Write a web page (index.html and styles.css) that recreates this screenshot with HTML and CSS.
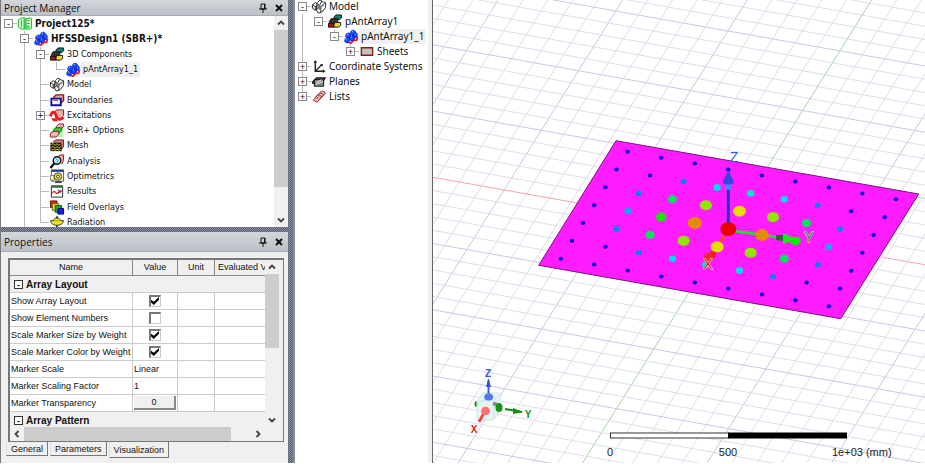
FILE: index.html
```html
<!DOCTYPE html>
<html lang="en">
<head>
  <meta charset="UTF-8">
  <meta name="viewport" content="width=device-width, initial-scale=1.0">
  <title>Project125 - HFSSDesign1</title>
  <link rel="stylesheet" href="styles.css">
</head>
<body>
  <svg class="defs" aria-hidden="true">
    <symbol id="i-project" viewBox="0 0 16 16"><path d="M1 4l3-2h4v12H4l-3-2zM9 3l5-1 1 1v10l-2 1H9z" fill="#d8ffd8" stroke="#10b020"/><path d="M4 4v8M10 5h3M10 8h3M7 3v10" stroke="#10b020"/><path d="M9 10h4v3H9z" fill="#40e040"/></symbol>
    <symbol id="i-array" viewBox="0 0 16 16"><path d="M4 14l4 1 3-3 3 0 1-4" fill="none" stroke="#f02020" stroke-width="2"/><g fill="#1848ff" stroke="#0018c0" stroke-width=".6"><path d="M8 2l3-1 2 2-1 3-3 1-2-2zM11 5l3-1 1 2-1 3-3 1-2-2zM3 5l3-1 2 2-1 3-3 1-2-2zM7 8l3-1 2 2-1 3-3 1-2-2zM2 10l3-1 2 2-1 3-3 1-2-2z"/></g><path d="M9 3l1-.5M12 6l1-.5M4 6l1-.5M8 9l1-.5M3 11l1-.5" stroke="#70c0ff" stroke-width="1.500"/></symbol>
    <symbol id="i-comp" viewBox="0 0 16 16"><path d="M7 3l2-2h6v3l-2 2H7z" fill="#108070" stroke="#111"/><path d="M2 8l2-3h7v3l-2 2H2z" fill="#333" stroke="#111"/><path d="M1 10h6v4H1z" fill="#a01818" stroke="#111"/><path d="M7 10l2-1h5v3l-2 2H7z" fill="#e8d840" stroke="#111"/></symbol>
    <symbol id="i-model" viewBox="0 0 16 16"><g fill="#fff" stroke="#222"><path d="M1 6l3-2 3 2v4l-3 2-3-2zM6 4l3-3 3 2 3 1v5l-4 5-4 1-2-4z"/><path d="M1 6l3 2 3-2M4 8v4M7 5l3 3 4-3M10 8v6M7 9l3 2M11 2l-2 4"/></g><path d="M8 6l2 2v5l-3-3zM12 5l2 0-2 4z" fill="#777"/></symbol>
    <symbol id="i-bound" viewBox="0 0 16 16"><path d="M4 5l3-3h8v6l-3 3" fill="#e8a0a0" stroke="#801818" stroke-width="1.500"/><path d="M2 6h10v7H2z" fill="#fff" stroke="#1010a0" stroke-width="2"/><path d="M4 8h5" stroke="#e03030"/></symbol>
    <symbol id="i-exc" viewBox="0 0 16 16"><path d="M5 4l3-2h7v6l-3 3H7z" fill="#f0b0b0" stroke="#801818"/><path d="M1 9c2-7 5-5 6-1s4 6 8 2" fill="none" stroke="#f01818" stroke-width="3"/><path d="M2 11h5l2 3H4z" fill="#f01818"/></symbol>
    <symbol id="i-sbr" viewBox="0 0 16 16"><path d="M3 5h11v10H3z" fill="#a0ffa0"/><path d="M7 4l3-3h5v3l-3 3H7z" fill="#f0b8b8" stroke="#802020"/><path d="M4 8l3-3h6v3l-3 3H4z" fill="#40c040" stroke="#106010"/><path d="M1 11l3-2h6v3l-3 3H1z" fill="#f0b8b8" stroke="#802020"/></symbol>
    <symbol id="i-mesh" viewBox="0 0 16 16"><path d="M4 4l3-2h8v7l-2 3" fill="#d08080" stroke="#701010"/><path d="M1 5h12v9H1z" fill="#111"/><path d="M2 7l2-1 2 2 2-2 2 2 2-2M2 10l2-1 2 2 2-2 2 2 2-2M2 13l2-1 2 1 2-1 2 1 2-1" fill="none" stroke="#f0e030"/></symbol>
    <symbol id="i-analysis" viewBox="0 0 16 16"><path d="M8 4l3-3h4v6l-2 4" fill="#f0a8a8" stroke="#801818"/><circle cx="8" cy="7" r="4" fill="#b8f0f8" stroke="#111" stroke-width="1.500"/><path d="M5 10l-4 5" stroke="#111" stroke-width="2.500"/><path d="M7 5l2 2-1 2" fill="none" stroke="#2070c0"/></symbol>
    <symbol id="i-opti" viewBox="0 0 16 16"><path d="M2 1h13v12H2z" fill="#fff" stroke="#555"/><path d="M2 1h13v2H2z" fill="#2030a0"/><path d="M1 7h4v5H1z" fill="#f8f8a0" stroke="#777"/><circle cx="9" cy="8" r="4" fill="#f0e020" stroke="#444"/><circle cx="9" cy="8" r="1.500" fill="#fff" stroke="#333"/><path d="M6 14h7" stroke="#444" stroke-width="2"/></symbol>
    <symbol id="i-results" viewBox="0 0 16 16"><path d="M2 2h12v12H2z" fill="#fff" stroke="#222"/><path d="M2 2h12v2H2z" fill="#207040"/><path d="M3 10c2-5 3 0 5 0s3-4 6-2" fill="none" stroke="#e02020" stroke-width="1.300"/><path d="M9 6l3 4M12 6l-3 4" stroke="#333"/></symbol>
    <symbol id="i-field" viewBox="0 0 16 16"><path d="M1 1h7v7H1z" fill="#e81818" stroke="#701010"/><path d="M3 4h7v7H3z" fill="#f0e020" stroke="#706010"/><path d="M6 6h7v7H6z" fill="#20b030" stroke="#105010"/><path d="M9 9h6v6H9z" fill="#1020f0" stroke="#000060"/></symbol>
    <symbol id="i-rad" viewBox="0 0 16 16"><path d="M1 6h14c-1 4-4 5-7 5S2 10 1 6z" fill="#f0e020" stroke="#333"/><path d="M4 6c1-2 2-3 4-3s3 1 4 3" fill="#f0e020" stroke="#333"/><path d="M8 1v3M8 11v2" stroke="#333" stroke-width="1.500"/><path d="M4 15l4-3 4 3z" fill="#111"/></symbol>
    <symbol id="i-sheet" viewBox="0 0 16 16"><path d="M2 4h12v8H2z" fill="#c8c0c0" stroke="#802020" stroke-width="1.500"/></symbol>
    <symbol id="i-cs" viewBox="0 0 16 16"><path d="M4 3v10h9M4 13l7-7" fill="none" stroke="#222" stroke-width="1.500"/><path d="M4 1l2 3H2zM15 13l-3 2v-4zM12 5v3l-3-2z" fill="#222"/></symbol>
    <symbol id="i-planes" viewBox="0 0 16 16"><path d="M1 8l4-4h10l-4 6H1z" fill="#444" stroke="#111"/><path d="M3 6h10v7H3z" fill="#888" stroke="#111"/><path d="M5 9l6-3M5 11l7-3" stroke="#eee"/></symbol>
    <symbol id="i-lists" viewBox="0 0 16 16"><g fill="#f4c8c8" stroke="#902020"><path d="M6 7l5-5 4 2-5 6z"/><path d="M4 9l5-5 4 2-5 6z"/><path d="M2 12l5-6 4 2-5 6z"/></g><path d="M5 11l3-3" stroke="#902020"/></symbol>
    <symbol id="i-pin" viewBox="0 0 10 10"><path d="M3 1h4v5H3zM1 6h8M5 6v4" fill="none" stroke="#111"/><path d="M6 1h1v5H6z" fill="#111"/></symbol>
    <symbol id="i-close" viewBox="0 0 10 10"><path d="M2 2l6 6M8 2L2 8" stroke="#111" stroke-width="2"/></symbol>
    <symbol id="i-arrow" viewBox="0 0 10 10"><path d="M2 6.500l3-3 3 3" fill="none" stroke="#444" stroke-width="1.800"/></symbol>
  </svg>

  <main class="app">
    <div class="dock">
      <section class="panel">
        <header class="title">
          <h2>Project Manager</h2>
          <button aria-label="Pin"><svg><use href="#i-pin"/></svg></button>
          <button aria-label="Close"><svg><use href="#i-close"/></svg></button>
        </header>
        <div class="tree-box">
          <ul class="tree tree-project">
            <li><i class="h"><button class="exp">-</button></i><svg><use href="#i-project"/></svg><b>Project125*</b></li>
            <li><i></i><i class="t"><button class="exp">-</button></i><svg><use href="#i-array"/></svg><b>HFSSDesign1 (SBR+)*</b></li>
            <li><i></i><i class="v"></i><i class="t"><button class="exp">-</button></i><svg><use href="#i-comp"/></svg><span>3D Components</span></li>
            <li><i></i><i class="v"></i><i class="v"></i><i class="l"></i><svg><use href="#i-array"/></svg><span class="sel">pAntArray1_1</span></li>
            <li><i></i><i class="v"></i><i class="t"></i><svg><use href="#i-model"/></svg><span>Model</span></li>
            <li><i></i><i class="v"></i><i class="t"></i><svg><use href="#i-bound"/></svg><span>Boundaries</span></li>
            <li><i></i><i class="v"></i><i class="t"><button class="exp">+</button></i><svg><use href="#i-exc"/></svg><span>Excitations</span></li>
            <li><i></i><i class="v"></i><i class="t"></i><svg><use href="#i-sbr"/></svg><span>SBR+ Options</span></li>
            <li><i></i><i class="v"></i><i class="t"></i><svg><use href="#i-mesh"/></svg><span>Mesh</span></li>
            <li><i></i><i class="v"></i><i class="t"></i><svg><use href="#i-analysis"/></svg><span>Analysis</span></li>
            <li><i></i><i class="v"></i><i class="t"></i><svg><use href="#i-opti"/></svg><span>Optimetrics</span></li>
            <li><i></i><i class="v"></i><i class="t"></i><svg><use href="#i-results"/></svg><span>Results</span></li>
            <li><i></i><i class="v"></i><i class="t"></i><svg><use href="#i-field"/></svg><span>Field Overlays</span></li>
            <li><i></i><i class="v"></i><i class="l"></i><svg><use href="#i-rad"/></svg><span>Radiation</span></li>
          </ul>
          <div class="vscroll">
            <button aria-label="Scroll up"><svg><use href="#i-arrow"/></svg></button>
            <div class="track"><div class="thumb thumb-tree"></div></div>
            <button aria-label="Scroll down"><svg class="down"><use href="#i-arrow"/></svg></button>
          </div>
        </div>
      </section>

      <div class="splitter"></div>

      <section class="panel props">
        <header class="title title-props">
          <h2>Properties</h2>
          <button aria-label="Pin"><svg><use href="#i-pin"/></svg></button>
          <button aria-label="Close"><svg><use href="#i-close"/></svg></button>
        </header>
        <div class="frame">
          <div class="frame-top">
            <div class="table-clip">
              <table>
                <colgroup><col class="c-name"><col class="c-value"><col class="c-unit"><col class="c-eval"></colgroup>
                <thead><tr><th>Name</th><th>Value</th><th>Unit</th><th class="last">Evaluated V</th></tr></thead>
                <tbody>
                  <tr class="group"><td colspan="4"><button class="exp">-</button>Array Layout</td></tr>
                  <tr><td><label for="layout">Show Array Layout</label></td><td class="mid"><input type="checkbox" id="layout" checked></td><td></td><td></td></tr>
                  <tr><td><label for="numbers">Show Element Numbers</label></td><td class="mid"><input type="checkbox" id="numbers"></td><td></td><td></td></tr>
                  <tr><td><label for="size">Scale Marker Size by Weight</label></td><td class="mid"><input type="checkbox" id="size" checked></td><td></td><td></td></tr>
                  <tr><td><label for="color">Scale Marker Color by Weight</label></td><td class="mid"><input type="checkbox" id="color" checked></td><td></td><td></td></tr>
                  <tr><td><label for="scale">Marker Scale</label></td><td><select id="scale"><option>Linear</option></select></td><td></td><td></td></tr>
                  <tr><td><label for="factor">Marker Scaling Factor</label></td><td><input type="text" id="factor" value="1"></td><td></td><td></td></tr>
                  <tr><td><label for="transparency">Marker Transparency</label></td><td class="mid"><button class="level" id="transparency">0</button></td><td></td><td></td></tr>
                  <tr class="group"><td colspan="4"><button class="exp">-</button>Array Pattern</td></tr>
                </tbody>
              </table>
            </div>
            <div class="vscroll">
              <button aria-label="Scroll up"><svg><use href="#i-arrow"/></svg></button>
              <div class="track"><div class="thumb thumb-props"></div></div>
              <button aria-label="Scroll down"><svg class="down"><use href="#i-arrow"/></svg></button>
            </div>
          </div>
          <div class="hscroll">
            <button aria-label="Scroll left"><svg class="left"><use href="#i-arrow"/></svg></button>
            <div class="track"><div class="thumb thumb-h"></div></div>
            <button aria-label="Scroll right"><svg class="right"><use href="#i-arrow"/></svg></button>
          </div>
        </div>
        <nav class="tabs">
          <button>General</button>
          <button>Parameters</button>
          <button class="active">Visualization</button>
        </nav>
      </section>
    </div>

    <div class="splitter splitter-v"></div>

    <section class="model">
      <ul class="tree">
        <li><i class="h"><button class="exp">-</button></i><svg><use href="#i-model"/></svg><span>Model</span></li>
        <li><i class="v"></i><i class="h"><button class="exp">-</button></i><svg><use href="#i-comp"/></svg><span>pAntArray1</span></li>
        <li><i class="v"></i><i></i><i class="l"><button class="exp">-</button></i><svg><use href="#i-array"/></svg><span class="sel">pAntArray1_1</span></li>
        <li><i class="v"></i><i></i><i></i><i class="l"><button class="exp">+</button></i><svg><use href="#i-sheet"/></svg><span>Sheets</span></li>
        <li><i class="t"><button class="exp">+</button></i><svg><use href="#i-cs"/></svg><span>Coordinate Systems</span></li>
        <li><i class="t"><button class="exp">+</button></i><svg><use href="#i-planes"/></svg><span>Planes</span></li>
        <li><i class="l"><button class="exp">+</button></i><svg><use href="#i-lists"/></svg><span>Lists</span></li>
      </ul>
    </section>

    <section class="view">
      <svg viewBox="0 0 492 463" preserveAspectRatio="xMinYMin slice" role="img" aria-label="Antenna array layout">
        <g id="grid"></g>
        <path d="M183 140.700L485.700 194L407.700 318.700L105.700 265.300Z" fill="#ff1cff" stroke="#7a107a"/>
        <path d="M295 229L280 254" stroke="#f05010" stroke-width="2.500"/>
        <path d="M302 231L350 238" stroke="#10f010" stroke-width="2.500"/>
        <g id="markers"></g>
        <g>
          <path d="M295.300 186v37" stroke="#1c34d0" stroke-width="3"/>
          <rect x="292" y="182" width="6.500" height="8" rx="2" fill="#4a80f8"/>
          <path d="M295.300 170l6 13q-6 3-12 0z" fill="#3448e0"/>
          <path d="M343 235l8 0v6l-8-1z" fill="#087808"/>
          <path d="M350 233l12 6-12 5z" fill="#10f010"/>
          <path d="M271 255l8-4 4 1-2 7-5 4-5-4z" fill="#e03030"/>
          <path d="M278 253l5-1-2 6z" fill="#ff1010"/>
        </g>
        <g class="axis-name">
          <text x="301" y="162" fill="#3458e0">Z</text>
          <text x="376" y="242" class="halo" fill="#109010">Y</text>
          <text x="275" y="269" class="halo" fill="#f01818">X</text>
        </g>

        <!-- orientation triad -->
        <g>
          <ellipse cx="43.500" cy="404" rx="2" ry="3" fill="#109010"/>
          <path d="M44 401l6-8h18l-3 22-5 5H44z" fill="#e2f2f5" fill-opacity=".85" stroke="#cfe3e8"/>
          <path d="M44 401h17l7-8M61 401v18" fill="none" stroke="#cfe3e8"/>
          <path d="M55.500 380v17" stroke="#4060e0" stroke-width="2"/>
          <path d="M55.500 378l2.500 9h-5z" fill="#3454d8"/>
          <ellipse cx="55.700" cy="397" rx="4.500" ry="3.500" fill="#5078f8"/>
          <ellipse cx="62" cy="404" rx="2.500" ry="2" fill="#888"/>
          <ellipse cx="66" cy="407.500" rx="3.500" ry="4.500" fill="#109810"/>
          <path d="M72 409l17 3" stroke="#109010" stroke-width="2"/>
          <path d="M80 408l10 4-10 2z" fill="#109010"/>
          <path d="M51 413l-5 9" stroke="#f04848" stroke-width="3"/>
          <circle cx="52.500" cy="411" r="4.300" fill="#ff7070"/>
        </g>
        <g class="triad-name">
          <text x="55" y="377" fill="#3458e0">Z</text>
          <text x="95" y="418" fill="#109010">Y</text>
          <text x="41" y="433" fill="#f01818">X</text>
        </g>

        <rect x="177.500" y="433" width="118" height="5" fill="#fff" stroke="#333"/>
        <rect x="295" y="432.500" width="119" height="6" fill="#000"/>
        <g class="scale">
          <text x="177" y="456" text-anchor="middle">0</text>
          <text x="295" y="456" text-anchor="middle">500</text>
          <text x="399" y="456">1e+03 (mm)</text>
        </g>
      </svg>
    </section>
  </main>

  <script>
    const NS = 'http://www.w3.org/2000/svg';
    const slope = 0.1778;
    const skew = 0.6245;

    function add(parent, tag, attrs) {
      const el = document.createElementNS(NS, tag);
      for (const key in attrs) el.setAttribute(key, attrs[key]);
      parent.appendChild(el);
    }

    function drawGrid() {
      const grid = document.getElementById('grid');
      for (let n = -22; n <= 22; n++) {
        const y = 177.3 + n * 13.25;
        const x = 438.7 + n * 24.9;
        const color = n % 5 ? '#dedeec' : '#c8c8e4';
        add(grid, 'line', { x1: 0, y1: y, x2: 492, y2: y + 492 * slope, stroke: n ? color : '#f0a8a8' });
        add(grid, 'line', { x1: x, y1: 0, x2: x - 463 * skew, y2: 463, stroke: n ? color : '#a8d4a8' });
      }
    }

    // keyed by distance from the centre: |column|,|row|
    const styles = {
      '0,0': ['#e60000', 8, 7],
      '1,0': ['#e68a00', 7, 6],
      '0,1': ['#e6dc00', 6.5, 5.5],
      '1,1': ['#90e600', 6, 5],
      '2,0': ['#14e600', 5.3, 4.5],
      '2,1': ['#00e65c', 4.5, 4],
      '0,2': ['#00e6c8', 3.8, 3.4],
      '1,2': ['#00dcf0', 3.6, 3.3],
      '3,0': ['#00b0f0', 3.4, 3],
      '3,1': ['#0082e6', 3, 2.6],
      '2,2': ['#0082e6', 3, 2.6]
    };

    function drawMarkers() {
      const markers = document.getElementById('markers');
      for (let row = -3; row <= 3; row++) {
        for (let col = -4; col <= 4; col++) {
          const [fill, rx, ry] = styles[Math.abs(col) + ',' + Math.abs(row)] || ['#0000e0', 2.2, 2];
          const cx = 295.3 + col * 33.53 - row * 11.16;
          const cy = 229 + col * 5.96 + row * 17.83;
          add(markers, 'ellipse', { cx, cy, rx, ry, fill });
        }
      }
    }

    drawGrid();
    drawMarkers();
  </script>
</body>
</html>
```

FILE: styles.css
```css
* {
  box-sizing: border-box;
}

body {
  margin: 0;
  height: 100vh;
  padding-bottom: 1px;
  overflow: hidden;
  background: #fff;
  color: #111;
  font-family: 'DejaVu Sans Condensed', 'Noto Sans', sans-serif;
  font-size: 9px;
}

button {
  margin: 0;
  padding: 0;
  border: none;
  background: none;
  color: inherit;
  font: inherit;
}

.defs {
  display: none;
}

.app {
  display: grid;
  grid-template-columns: minmax(0, 288fr) 7px minmax(0, 138fr) minmax(0, 492fr);
  height: 100%;
}

.dock {
  display: grid;
  grid-template-rows: minmax(0, 227fr) 5px minmax(0, 231fr);
  min-height: 0;
  border-left: 1px solid #777;
}

.panel {
  display: flex;
  flex-direction: column;
  min-height: 0;
  background: #fff;
}

.splitter {
  background: repeating-conic-gradient(#555f78 0 25%, #8a8f98 0 50%) 0 0 / 2px 2px;
}

.splitter-v {
  border-right: 2px solid #8c8c8c;
}

.title {
  display: flex;
  align-items: center;
  gap: 6px;
  flex: none;
  height: 16px;
  padding: 0 4px 0 3px;
  background: linear-gradient(#d3d7dc, #bcc1c7);
  border-bottom: 1px solid #a9adb2;
}

.title h2 {
  flex: 1;
  margin: 0;
  font-family: 'Open Sans', sans-serif;
  font-size: 10px;
  line-height: 12px;
  font-weight: 400;
}

.title button,
.title svg {
  display: block;
  width: 10px;
  height: 10px;
}

.title-props {
  height: 20px;
}

/* trees */
.tree-box {
  display: flex;
  flex: 1;
  min-height: 0;
  overflow: hidden;
}

.tree {
  margin: 0;
  padding: 0;
  list-style: none;
}

.tree-project {
  display: grid;
  grid-auto-rows: 1fr;
  flex: 1;
  margin-bottom: -3px;
}

.tree li {
  display: flex;
  align-items: center;
  min-height: 15px;
  white-space: nowrap;
}

.tree svg {
  flex: none;
  width: 16px;
  height: 15px;
}

.tree span,
.tree b {
  padding: 0 2px;
  line-height: 15px;
}

.tree b {
  font-size: 10px;
}

.tree .sel {
  background: #f0f0f0;
}

.tree i {
  display: flex;
  align-items: center;
  flex: none;
  align-self: stretch;
  width: 16px;
  font-style: normal;
}

.tree .v {
  background: linear-gradient(#bbb, #bbb) 7px 0 / 1px 100% no-repeat;
}

.tree .h {
  background: linear-gradient(#bbb, #bbb) 7px 50% / 9px 1px no-repeat;
}

.tree .t {
  background: linear-gradient(#bbb, #bbb) 7px 0 / 1px 100% no-repeat, linear-gradient(#bbb, #bbb) 7px 50% / 9px 1px no-repeat;
}

.tree .l {
  background: linear-gradient(#bbb, #bbb) 7px 0 / 1px 50% no-repeat, linear-gradient(#bbb, #bbb) 7px 50% / 9px 1px no-repeat;
}

.exp {
  flex: none;
  width: 9px;
  height: 9px;
  border: 1px solid #888;
  background: #fff;
  font-size: 9px;
  line-height: 6px;
  text-align: center;
}

.tree .exp {
  margin-left: 3px;
}

.model {
  min-width: 0;
  overflow: hidden;
  background: #fff;
  border-right: 1px solid #666;
  font-family: 'Noto Sans', sans-serif;
  font-size: 10px;
  box-shadow: inset -4px 0 #f0f0f0;
}

.model .tree {
  margin-top: -1px;
}

/* scroll bars */
.vscroll {
  display: flex;
  flex-direction: column;
  flex: none;
  width: 14px;
  background: #f0f0f0;
}

.vscroll button,
.hscroll button {
  flex: none;
  width: 14px;
  height: 14px;
}

.vscroll svg,
.hscroll svg {
  display: block;
  width: 10px;
  height: 10px;
  margin: 2px;
}

.down {
  transform: rotate(180deg);
}

.left {
  transform: rotate(-90deg);
}

.right {
  transform: rotate(90deg);
}

.track {
  flex: 1;
  min-height: 0;
}

.thumb {
  background: #cdcdcd;
}

.thumb-tree {
  height: 86%;
}

.thumb-props {
  height: 53%;
}

.thumb-h {
  width: 91%;
  height: 100%;
}

.hscroll {
  display: flex;
  flex: none;
  height: 14px;
  padding-right: 14px;
  background: #f0f0f0;
}

/* properties */
.props {
  background: #f0f0f0;
  font-family: 'Liberation Sans', sans-serif;
  font-size: 9px;
}

.frame {
  display: flex;
  flex-direction: column;
  flex: 1;
  min-height: 0;
  margin: 6px 4px 0 7px;
  padding-right: 4px;
  border: 2px solid #777;
  border-bottom-width: 1px;
  border-right-width: 1px;
}

.frame-top {
  display: flex;
  flex: 1;
  min-height: 0;
}

.table-clip {
  flex: 1;
  min-width: 0;
  overflow: hidden;
  background: #fff;
}

table {
  width: 100%;
  table-layout: fixed;
  border-collapse: separate;
  border-spacing: 0;
}

.c-name {
  width: 123px;
}

.c-value {
  width: 45px;
}

.c-unit {
  width: 37px;
}

th,
td {
  height: 17px;
  padding: 0 1px;
  border-right: 1px solid #ccc;
  border-bottom: 1px solid #ccc;
  line-height: 15px;
  text-align: left;
  white-space: nowrap;
}

th {
  height: 16px;
  border-color: #888;
  background: #f0f0f0;
  font-weight: normal;
  text-align: center;
}

th.last {
  padding-left: 3px;
  text-align: left;
}

th:last-child,
td:last-child {
  border-right: none;
}

.group td {
  background: #f0f0f0;
  font-size: 10px;
  font-weight: bold;
}

.group .exp {
  margin: 0 3px 0 3px;
  border-color: #333;
  vertical-align: middle;
}

.mid {
  text-align: center;
}

td input[type="checkbox"] {
  display: block;
  appearance: none;
  width: 12px;
  height: 12px;
  margin: 0 auto;
  border: 1px solid #ccc;
  border-top: 2px solid #777;
  border-left: 2px solid #777;
  background: #fff;
}

td input[type="checkbox"]:checked::before {
  content: '';
  display: block;
  width: 8px;
  height: 8px;
  background: #000;
  clip-path: polygon(0 35%, 35% 60%, 100% 0, 100% 35%, 35% 100%, 0 70%);
}

td select,
td input[type="text"] {
  display: block;
  appearance: none;
  width: 100%;
  height: 15px;
  margin: 0;
  padding: 0;
  border: none;
  background: none;
  color: inherit;
  font: inherit;
}

.level {
  display: block;
  width: 100%;
  height: 14px;
  border-right: 2px solid #888;
  border-bottom: 2px solid #888;
  background: #f0f0f0;
  line-height: 12px;
}

.tabs {
  display: flex;
  align-items: flex-start;
  flex: none;
  gap: 2px;
  height: 21px;
  padding-left: 5px;
}

.tabs button {
  height: 14px;
  padding: 0 4px;
  border: 1px solid #777;
  border-top: none;
  border-left-color: #ddd;
  line-height: 12px;
}

.tabs .active {
  height: 16px;
  line-height: 16px;
}

/* 3D view */
.view {
  min-width: 0;
  min-height: 0;
  overflow: hidden;
}

.view svg {
  display: block;
  width: 100%;
  height: 100%;
}

.axis-name {
  font-family: 'Liberation Sans', sans-serif;
  font-size: 14px;
  text-anchor: middle;
}

.halo {
  paint-order: stroke;
  stroke: #f0d8f0;
  stroke-width: 1px;
}

.triad-name {
  font-family: 'Liberation Sans', sans-serif;
  font-size: 10px;
  font-weight: bold;
  text-anchor: middle;
}

.scale {
  font-family: 'Liberation Sans', sans-serif;
  font-size: 11px;
  fill: #222;
}
```
